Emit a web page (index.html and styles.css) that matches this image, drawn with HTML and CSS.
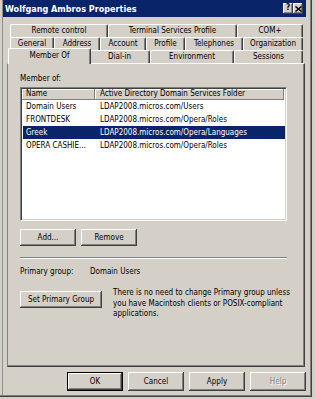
FILE: index.html
```html
<!DOCTYPE html>
<html>
<head>
<meta charset="utf-8">
<title>Wolfgang Ambros Properties</title>
<link rel="stylesheet" href="styles.css">
</head>
<body>
<div class="window">
  <div class="titlebar">
    <span class="title">Wolfgang Ambros Properties</span>
    <div class="caption-btns">
      <span class="cbtn q">?</span>
      <span class="cbtn x"><svg width="7" height="6" viewBox="0 0 7 6"><path d="M0.5 0.5 L6.5 5.5 M6.5 0.5 L0.5 5.5" stroke="#000" stroke-width="1.5" fill="none"/></svg></span>
    </div>
  </div>

  <div class="tabs">
    <div class="tabrow">
      <div class="tab t-remote">Remote control</div>
      <div class="tab t-terminal">Terminal Services Profile</div>
      <div class="tab t-com">COM+</div>
    </div>
    <div class="tabrow">
      <div class="tab t-general">General</div>
      <div class="tab t-address">Address</div>
      <div class="tab t-account">Account</div>
      <div class="tab t-profile">Profile</div>
      <div class="tab t-tel">Telephones</div>
      <div class="tab t-org">Organization</div>
    </div>
    <div class="tabrow">
      <div class="tab t-member active">Member Of</div>
      <div class="tab t-dial">Dial-in</div>
      <div class="tab t-env">Environment</div>
      <div class="tab t-sess">Sessions</div>
    </div>
  </div>

  <div class="panel">
    <div class="label">Member of:</div>
    <div class="listbox">
      <div class="lv-row lv-head">
        <div class="hcell c1">Name</div>
        <div class="hcell c2">Active Directory Domain Services Folder</div>
      </div>
      <div class="lv-row">
        <div class="cell c1">Domain Users</div>
        <div class="cell c2">LDAP2008.micros.com/Users</div>
      </div>
      <div class="lv-row">
        <div class="cell c1">FRONTDESK</div>
        <div class="cell c2">LDAP2008.micros.com/Opera/Roles</div>
      </div>
      <div class="lv-row selected">
        <div class="cell c1">Greek</div>
        <div class="cell c2">LDAP2008.micros.com/Opera/Languages</div>
      </div>
      <div class="lv-row">
        <div class="cell c1">OPERA CASHIE...</div>
        <div class="cell c2">LDAP2008.micros.com/Opera/Roles</div>
      </div>
    </div>

    <div class="btnrow">
      <button class="btn w56">Add...</button>
      <button class="btn w56">Remove</button>
    </div>

    <div class="separator"></div>

    <div class="primary">
      <span class="pg-label">Primary group:</span>
      <span>Domain Users</span>
    </div>

    <div class="setrow">
      <button class="btn w82">Set Primary Group</button>
      <p class="note">There is no need to change Primary group unless<br>you have Macintosh clients or POSIX-compliant<br>applications.</p>
    </div>
  </div>

  <div class="footer">
    <button class="btn fbtn default">OK</button>
    <button class="btn fbtn">Cancel</button>
    <button class="btn fbtn">Apply</button>
    <button class="btn fbtn disabled">Help</button>
  </div>
</div>
</body>
</html>
```

FILE: styles.css
```css
html, body {
  margin: 0;
  padding: 0;
  background: #d4d0c8;
}

body {
  font-family: "DejaVu Sans Condensed", "Liberation Sans", sans-serif;
  font-size: 8px;
  color: #000;
}

.window {
  width: 312px;
  height: 397px;
  box-sizing: border-box;
  background: #d4d0c8;
  border-right: 1px solid #404040;
  border-bottom: 1px solid #404040;
  padding: 0 5px 0 3px;
  display: flex;
  flex-direction: column;
  box-shadow: inset -1px -1px 0 #808080, inset 2px 0 0 #d4d0c8, inset 3px 0 0 #909090;
}

.titlebar {
  height: 17px;
  background: #0a246a;
  color: #fff;
  display: flex;
  align-items: center;
  justify-content: space-between;
  padding: 0 3px 0 2px;
}

.title {
  font-weight: bold;
  font-size: 9px;
}

.caption-btns {
  display: flex;
}

.cbtn {
  width: 10px;
  height: 11px;
  box-sizing: border-box;
  background: #d4d0c8;
  box-shadow: inset -1px -1px 0 #404040, inset 1px 1px 0 #fff, inset -2px -2px 0 #808080;
  display: flex;
  align-items: center;
  justify-content: center;
  color: #000;
  font-weight: bold;
  font-size: 8px;
  line-height: 1;
}

.cbtn.q {
  padding-bottom: 1px;
}

.cbtn svg {
  display: block;
}

/* Tabs */
.tabs {
  margin-top: 7px;
  margin-left: 7px;
  width: 293px;
}

.tabrow {
  display: flex;
  height: 13px;
}

.tab {
  box-sizing: border-box;
  height: 13px;
  border-top: 1px solid #fff;
  border-left: 1px solid #fff;
  border-right: 1px solid #404040;
  border-radius: 2px 2px 0 0;
  box-shadow: inset -1px 0 0 #808080;
  text-align: center;
  line-height: 12px;
  white-space: nowrap;
  background: #d4d0c8;
}

.tab.active {
  position: relative;
  z-index: 2;
  height: 16px;
  margin-top: -2px;
  margin-left: -2px;
  margin-right: -2px;
  line-height: 13px;
}

.t-remote { width: 98px; }
.t-terminal { width: 129px; }
.t-com { width: 66px; }

.t-general { width: 44px; }
.t-address { width: 46px; }
.t-account { width: 46px; }
.t-profile { width: 39px; }
.t-tel { width: 58px; }
.t-org { width: 60px; }

.t-member { width: 83px; }
.t-dial { width: 61px; }
.t-env { width: 84px; }
.t-sess { width: 69px; }

/* Panel */
.panel {
  position: relative;
  z-index: 1;
  margin-left: 4px;
  width: 298px;
  height: 304px;
  box-sizing: border-box;
  border-top: 1px solid #fff;
  border-left: 1px solid #808080;
  border-right: 1px solid #404040;
  border-bottom: 1px solid #404040;
  box-shadow: inset -1px -1px 0 #808080;
  padding: 10px 0 0 12px;
}

.label {
  line-height: 10px;
  height: 10px;
}

.listbox {
  margin-top: 3px;
  width: 267px;
  height: 134px;
  box-sizing: border-box;
  background: #fff;
  border-top: 1px solid #808080;
  border-left: 1px solid #808080;
  border-right: 1px solid #fff;
  border-bottom: 1px solid #fff;
  box-shadow: inset 1px 1px 0 #404040, inset -1px -1px 0 #d4d0c8;
  padding: 1px;
}

.lv-row {
  display: grid;
  grid-template-columns: 73px 189px;
  height: 13px;
  line-height: 13px;
  white-space: nowrap;
}

.lv-head {
  height: 11px;
  line-height: 10px;
}

.hcell {
  background: #d4d0c8;
  box-sizing: border-box;
  border-right: 1px solid #808080;
  border-bottom: 1px solid #808080;
  box-shadow: inset 1px 1px 0 #fff;
  padding-left: 4px;
  overflow: hidden;
}

.cell {
  overflow: hidden;
}

.cell.c1 { padding-left: 4px; }
.cell.c2 { padding-left: 5px; }
.hcell.c2 { padding-left: 5px; }

.lv-row.selected {
  background: #0a246a;
  color: #fff;
  margin-left: 1px;
  grid-template-columns: 72px 189px;
}

.lv-row.selected .c1 { padding-left: 3px; }

/* Buttons */
.btn {
  font-family: inherit;
  font-size: 8px;
  color: #000;
  background: #d4d0c8;
  border: none;
  margin: 0;
  padding: 0;
  height: 17px;
  box-sizing: border-box;
  box-shadow: inset -1px -1px 0 #404040, inset 1px 1px 0 #fff, inset -2px -2px 0 #808080;
  text-align: center;
  line-height: 16px;
}

.w56 { width: 56px; }
.w82 { width: 82px; }

.btnrow {
  margin-top: 8px;
  display: flex;
  gap: 5px;
}

.separator {
  margin-top: 11px;
  width: 267px;
  border-top: 1px solid #808080;
  border-bottom: 1px solid #fff;
}

.primary {
  margin-top: 8px;
  line-height: 10px;
  display: flex;
}

.pg-label {
  width: 70px;
}

.setrow {
  margin-top: 14px;
  display: flex;
  align-items: flex-start;
}

.note {
  margin: -3px 0 0 11px;
  line-height: 10.5px;
  white-space: nowrap;
}

/* Footer */
.footer {
  margin-top: 5px;
  display: flex;
  justify-content: flex-end;
  gap: 5px;
}

.fbtn {
  width: 56px;
  height: 19px;
  line-height: 18px;
}

.fbtn.default {
  box-shadow: inset 0 0 0 1px #000, inset -2px -2px 0 #404040, inset 2px 2px 0 #fff, inset -3px -3px 0 #808080;
}

.fbtn.disabled {
  color: #808080;
  text-shadow: 1px 1px 0 #fff;
}
```
